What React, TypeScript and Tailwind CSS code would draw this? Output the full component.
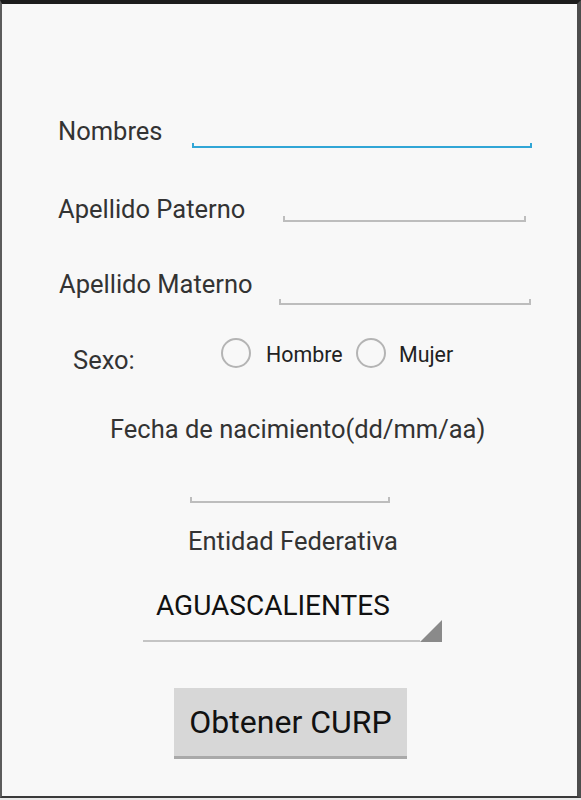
import React from "react";

const font = { fontFamily: "Roboto, 'Open Sans', sans-serif" };

function Underline({ className }: { className: string }) {
  // Holo style text field line with small ticks at both ends
  return <div className={"h-[6px] border-x-2 border-b-2 border-[#bdbdbd] " + className} />;
}

function Radio({ className }: { className: string }) {
  return (
    <div
      className={
        "h-[30px] w-[30px] shrink-0 rounded-full border-2 border-[#b4b4b4] " + className
      }
    />
  );
}

export default function App() {
  return (
    <div className="flex h-[800px] w-[581px] flex-col bg-[#e9e9e9]" style={font}>
      <div className="flex flex-1 flex-col border-t-4 border-r-4 border-b-2 border-l-2 border-t-[#1c1c1c] border-r-[#4d4d4d] border-b-[#3a3a3a] border-l-[#5c5c5c] bg-[#f8f8f8]">
        {/* Nombres */}
        <div className="mt-[114px] flex items-start pl-[56px]">
          <span className="w-[134px] text-[25.5px] leading-[26px] text-[#333]">Nombres</span>
          <div className="mt-[25px] h-[5px] w-[340px] border-x-2 border-b-2 border-[#31a6d6]" />
        </div>

        {/* Apellido Paterno */}
        <div className="mt-[48px] flex items-start pl-[56px]">
          <span className="w-[225px] text-[25.5px] leading-[26px] text-[#333]">Apellido Paterno</span>
          <Underline className="mt-[20px] w-[243px]" />
        </div>

        {/* Apellido Materno */}
        <div className="mt-[49px] flex items-start pl-[57px]">
          <span className="w-[220px] text-[25.5px] leading-[26px] text-[#333]">Apellido Materno</span>
          <Underline className="mt-[28px] w-[252px]" />
        </div>

        {/* Sexo */}
        <div className="mt-[33px] flex items-start pl-[71px]">
          <span className="mt-[9px] w-[148px] text-[25.5px] leading-[26px] text-[#333]">Sexo:</span>
          <Radio className="" />
          <span className="mt-[6px] ml-[15px] w-[90px] text-[21.4px] leading-[22px] text-[#222]">Hombre</span>
          <Radio className="" />
          <span className="mt-[6px] ml-[13px] text-[21.4px] leading-[22px] text-[#222]">Mujer</span>
        </div>

        {/* Fecha */}
        <div className="mt-[43px] pl-[108px] text-[25.5px] leading-[26px] text-[#333]">
          Fecha de nacimiento(dd/mm/aa)
        </div>
        <Underline className="mt-[55px] ml-[188px] w-[200px]" />

        {/* Entidad */}
        <div className="mt-[25px] pl-[186px] text-[25.5px] leading-[26px] text-[#333]">
          Entidad Federativa
        </div>

        {/* Spinner */}
        <div className="mt-[36px] ml-[141px] flex w-[299px] items-end">
          <div className="h-[52px] flex-1 border-b-2 border-[#c4c4c4] pt-[2px] pl-[13px] text-[28px] leading-[28px] text-[#111]">
            AGUASCALIENTES
          </div>
          <svg width="22" height="22" viewBox="0 0 22 22" className="shrink-0">
            <path d="M22 0 L22 22 L0 22 Z" fill="#8a8a8a" />
          </svg>
        </div>

        {/* Button */}
        <button className="mt-[46px] ml-[172px] flex h-[71px] w-[233px] items-center justify-center border-b-[3px] border-[#a9a9a9] bg-[#d7d7d7] text-[32px] leading-none text-[#111]">
          Obtener CURP
        </button>
      </div>
      <div className="h-[2px]" />
    </div>
  );
}
